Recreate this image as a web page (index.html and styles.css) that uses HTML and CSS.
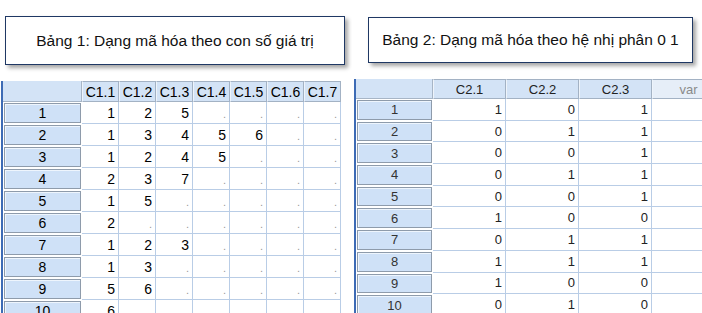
FILE: index.html
```html
<!DOCTYPE html>
<html lang="vi">
<head>
<meta charset="utf-8">
<link rel="stylesheet" href="styles.css">
</head>
<body>
<div class="page">
  <section class="panel left">
    <div class="caption cap1">Bảng 1: Dạng mã hóa theo con số giá trị</div>
    <div class="sheet sheet1">
      <div class="corner"></div>
      <div class="ch">C1.1</div><div class="ch">C1.2</div><div class="ch">C1.3</div><div class="ch">C1.4</div><div class="ch">C1.5</div><div class="ch">C1.6</div><div class="ch">C1.7</div>

      <div class="rh">1</div><div class="c">1</div><div class="c">2</div><div class="c">5</div><div class="c d">.</div><div class="c d">.</div><div class="c d">.</div><div class="c d">.</div>
      <div class="rh">2</div><div class="c">1</div><div class="c">3</div><div class="c">4</div><div class="c">5</div><div class="c">6</div><div class="c d">.</div><div class="c d">.</div>
      <div class="rh">3</div><div class="c">1</div><div class="c">2</div><div class="c">4</div><div class="c">5</div><div class="c d">.</div><div class="c d">.</div><div class="c d">.</div>
      <div class="rh">4</div><div class="c">2</div><div class="c">3</div><div class="c">7</div><div class="c d">.</div><div class="c d">.</div><div class="c d">.</div><div class="c d">.</div>
      <div class="rh">5</div><div class="c">1</div><div class="c">5</div><div class="c d">.</div><div class="c d">.</div><div class="c d">.</div><div class="c d">.</div><div class="c d">.</div>
      <div class="rh">6</div><div class="c">2</div><div class="c d">.</div><div class="c d">.</div><div class="c d">.</div><div class="c d">.</div><div class="c d">.</div><div class="c d">.</div>
      <div class="rh">7</div><div class="c">1</div><div class="c">2</div><div class="c">3</div><div class="c d">.</div><div class="c d">.</div><div class="c d">.</div><div class="c d">.</div>
      <div class="rh">8</div><div class="c">1</div><div class="c">3</div><div class="c d">.</div><div class="c d">.</div><div class="c d">.</div><div class="c d">.</div><div class="c d">.</div>
      <div class="rh">9</div><div class="c">5</div><div class="c">6</div><div class="c d">.</div><div class="c d">.</div><div class="c d">.</div><div class="c d">.</div><div class="c d">.</div>
      <div class="rh">10</div><div class="c">6</div><div class="c d">.</div><div class="c d">.</div><div class="c d">.</div><div class="c d">.</div><div class="c d">.</div><div class="c d">.</div>
    </div>
  </section>
  <section class="panel right">
    <div class="caption cap2">Bảng 2: Dạng mã hóa theo hệ nhị phân 0 1</div>
    <div class="sheet sheet2">
      <div class="corner"></div>
      <div class="ch">C2.1</div><div class="ch">C2.2</div><div class="ch">C2.3</div><div class="ch var">var</div>

      <div class="rh">1</div><div class="c">1</div><div class="c">0</div><div class="c">1</div><div class="c"></div>
      <div class="rh">2</div><div class="c">0</div><div class="c">1</div><div class="c">1</div><div class="c"></div>
      <div class="rh">3</div><div class="c">0</div><div class="c">0</div><div class="c">1</div><div class="c"></div>
      <div class="rh">4</div><div class="c">0</div><div class="c">1</div><div class="c">1</div><div class="c"></div>
      <div class="rh">5</div><div class="c">0</div><div class="c">0</div><div class="c">1</div><div class="c"></div>
      <div class="rh">6</div><div class="c">1</div><div class="c">0</div><div class="c">0</div><div class="c"></div>
      <div class="rh">7</div><div class="c">0</div><div class="c">1</div><div class="c">1</div><div class="c"></div>
      <div class="rh">8</div><div class="c">1</div><div class="c">1</div><div class="c">1</div><div class="c"></div>
      <div class="rh">9</div><div class="c">1</div><div class="c">0</div><div class="c">0</div><div class="c"></div>
      <div class="rh">10</div><div class="c">0</div><div class="c">1</div><div class="c">0</div><div class="c"></div>
    </div>
  </section>
</div>
</body>
</html>
```

FILE: styles.css
```css
html, body {
  margin: 0;
  padding: 0;
  background: #fff;
}
.page {
  display: flex;
  width: 702px;
  height: 313px;
  overflow: hidden;
  font-family: "Liberation Sans", Arial, sans-serif;
}
.panel {
  display: flex;
  flex-direction: column;
  align-items: flex-start;
  overflow: hidden;
}
.panel > * {
  flex: none;
}
.left {
  width: 352px;
  flex: none;
  padding-top: 16px;
}
.right {
  flex: 1;
  padding-top: 17px;
}
.caption {
  box-sizing: border-box;
  border: 1px solid #1f3864;
  background: #fff;
  box-shadow: 3px 3px 4px rgba(0, 0, 0, 0.35);
  display: flex;
  align-items: center;
  justify-content: center;
  font-size: 15.5px;
  color: #111;
}
.cap1 {
  margin-left: 5px;
  width: 340px;
  height: 49px;
}
.cap2 {
  margin-left: 16px;
  width: 325px;
  height: 46px;
}
.sheet {
  display: grid;
  border-left: 2px solid #3d6bb5;
  margin-top: 16px;
  background: #fff;
}
.sheet1 {
  margin-left: 1px;
  grid-template-columns: 79px repeat(7, 37px);
  grid-template-rows: 21px;
  grid-auto-rows: 22px;
  font-size: 14px;
  color: #000;
}
.sheet2 {
  margin-left: 2px;
  grid-template-columns: 77px repeat(4, 73px);
  grid-template-rows: 20px;
  grid-auto-rows: 21.7px;
  font-size: 13px;
  color: #222;
}
.corner {
  background: #d3e3f6;
  border-right: 1px solid #a7b5c6;
  border-bottom: 1px solid #a7b5c6;
}
.ch {
  box-sizing: border-box;
  background: #d3e3f6;
  border: 1px solid #a3b2c4;
  border-left-color: #eef4fb;
  display: flex;
  align-items: center;
  justify-content: center;
}
.ch.var {
  color: #8a8a8a;
  background: #e6eef8;
}
.rh {
  box-sizing: border-box;
  margin: 1px;
  background: #cfe1f7;
  border: 1px solid #8e9bab;
  box-shadow: inset 1px 1px 0 #eef5fd;
  display: flex;
  align-items: center;
  justify-content: center;
}
.sheet2 .rh {
  color: #333;
}
.c {
  box-sizing: border-box;
  border-right: 1px solid #b9cde6;
  border-bottom: 1px solid #b9cde6;
  display: flex;
  align-items: center;
  justify-content: flex-end;
  padding-right: 3px;
}
.c.d {
  align-items: flex-end;
  padding-bottom: 3px;
  color: #9a9a9a;
  font-size: 11px;
}
```
